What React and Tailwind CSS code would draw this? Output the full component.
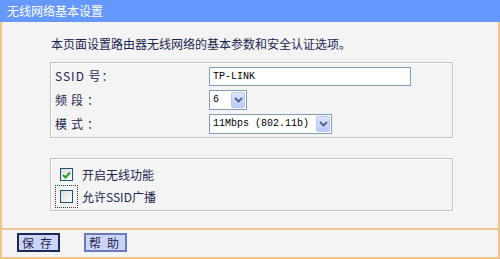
import React from 'react';

const font = { fontFamily: '"Noto Sans CJK SC", "DejaVu Sans", sans-serif' };

function Chevron() {
  return (
    <svg width="9" height="6" viewBox="0 0 9 6">
      <path d="M1 1 L4.5 4.5 L8 1" fill="none" stroke="#4d6185" strokeWidth="1.8" />
    </svg>
  );
}

function Select({ value, width }) {
  return (
    <div className={`flex h-[20px] items-stretch border border-[#7f9db9] bg-white ${width}`}>
      <div className="flex flex-1 items-center whitespace-nowrap pl-[3px] font-['Liberation_Mono',monospace] text-[10px] text-black">{value}</div>
      <div className="m-[1px] flex w-[14px] items-center justify-center rounded-[2px] border border-[#b9c8f3] bg-gradient-to-b from-[#dce6fd] to-[#b7cbf7]">
        <Chevron />
      </div>
    </div>
  );
}

function Checkbox({ checked }) {
  return (
    <div className="flex h-[13px] w-[13px] shrink-0 items-center justify-center border border-[#1c5180] bg-gradient-to-br from-[#dcdcd6] to-white">
      {checked && (
        <svg width="9" height="8" viewBox="0 0 9 8">
          <path d="M1 4 L3.5 6.5 L8 1.5" fill="none" stroke="#21a121" strokeWidth="2" />
        </svg>
      )}
    </div>
  );
}

export default function App() {
  return (
    <div className="flex h-[259px] w-[500px] flex-col overflow-hidden bg-[#f4f4f4]" style={font}>
      {/* title bar */}
      <div className="flex h-[22px] items-center bg-[#6699ff] pl-[7px] text-[12px] text-white">
        无线网络基本设置
      </div>

      <div className="flex flex-1 flex-col border-x-2 border-b-2 border-[#f2c48a]">
        <div className="pl-[49px] pt-[13px] text-[12px] leading-[17px] text-[#1b2450]">
          本页面设置路由器无线网络的基本参数和安全认证选项。
        </div>

        {/* fieldset 1 */}
        <div className="ml-[48px] mt-[10px] flex h-[76px] w-[403px] flex-col justify-center gap-[4px] border border-[#c4c4c4] pl-[4px] shadow-[inset_1px_1px_0_#fff,1px_1px_0_#fff] text-[12px] text-[#1b2450]">
          <div className="flex items-center">
            <div className="w-[154px] tracking-[1px]">SSID 号：</div>
            <div className="flex h-[19px] w-[202px] items-center border border-[#7f9db9] bg-white pl-[3px] font-['Liberation_Mono',monospace] text-[10px] text-black">
              TP-LINK
            </div>
          </div>
          <div className="flex items-center">
            <div className="w-[154px] tracking-[4px]">频段：</div>
            <Select value="6" width="w-[38px]" />
          </div>
          <div className="flex items-center">
            <div className="w-[154px] tracking-[4px]">模式：</div>
            <Select value="11Mbps (802.11b)" width="w-[123px]" />
          </div>
        </div>

        {/* fieldset 2 */}
        <div className="ml-[48px] mt-[20px] flex h-[53px] w-[403px] flex-col gap-[4px] border border-[#c4c4c4] pl-[4px] pt-[9px] shadow-[inset_1px_1px_0_#fff,1px_1px_0_#fff] text-[12px] text-[#1b2450]">
          <div className="flex h-[13px] items-center gap-[9px] pl-[5px]">
            <Checkbox checked />
            <span>开启无线功能</span>
          </div>
          <div className="flex items-center gap-[4px]">
            <div className="border border-dotted border-[#333] p-[4px]">
              <Checkbox />
            </div>
            <span>允许SSID广播</span>
          </div>
        </div>

        <div className="mt-auto border-t-2 border-[#f2c48a] pb-[5px] pl-[15px] pt-[3px]">
          <div className="flex gap-[24px]">
            <div className="flex h-[19px] w-[43px] items-center overflow-hidden whitespace-nowrap border-2 border-[#1b2a5a] bg-[#cdd5f6] pl-[3px] text-[12px] tracking-[6px] text-[#1b2450]">
              保存
            </div>
            <div className="flex h-[19px] w-[43px] items-center overflow-hidden whitespace-nowrap border-2 border-[#6a7bbd] bg-[#cdd5f6] pl-[3px] text-[12px] tracking-[6px] text-[#1b2450]">
              帮助
            </div>
          </div>
        </div>
      </div>
    </div>
  );
}
